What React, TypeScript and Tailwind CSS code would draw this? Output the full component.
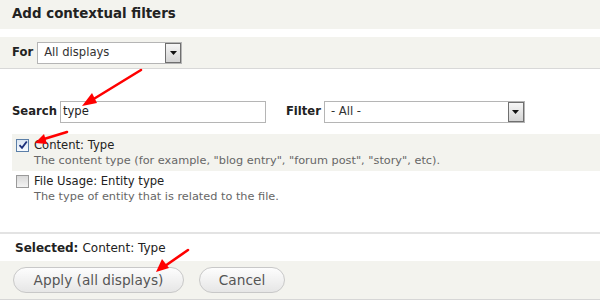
const font = { fontFamily: '"DejaVu Sans", Verdana, sans-serif' }

function SelectBox({ value, width }: { value: string; width: string }) {
  return (
    <div className={`flex h-[22px] items-center border border-[#b5b5b5] bg-white ${width}`}>
      <span className="flex-1 truncate pl-[6px] text-[11.6px] text-[#333]">{value}</span>
      <span className="flex h-[20px] w-[16px] items-center justify-center border border-[#6f6f6f] bg-gradient-to-b from-[#f6f6f6] to-[#d4d4d4]">
        <svg width="7" height="4" viewBox="0 0 7 4">
          <path d="M0 0h7L3.5 4z" fill="#111" />
        </svg>
      </span>
    </div>
  )
}

function Checkbox({ checked }: { checked?: boolean }) {
  return (
    <span
      className={`flex h-[13px] w-[13px] shrink-0 items-center justify-center border bg-gradient-to-b ${
        checked ? 'border-[#5b7fa8] from-[#dbe6f2] to-[#f7fbff]' : 'border-[#9a9a9a] from-[#d9d9d9] to-[#f4f4f4]'
      }`}
    >
      {checked && (
        <svg width="10" height="10" viewBox="0 0 10 10">
          <path d="M1.5 5.2 4 7.8 8.8 1.5" stroke="#1b2f7a" strokeWidth="1.8" fill="none" />
        </svg>
      )}
    </span>
  )
}

function Arrows() {
  return (
    <svg className="pointer-events-none absolute inset-0" width="600" height="300" viewBox="0 0 600 300">
      <g stroke="#f00" strokeWidth="2.6" strokeLinecap="round" fill="#f00">
        <line x1="141" y1="70" x2="92" y2="100" />
        <polygon points="82,106 92,93 97,103" stroke="none" />
        <line x1="67" y1="132" x2="44" y2="139" />
        <polygon points="35,143 44,134 47,144" stroke="none" />
        <line x1="188" y1="250" x2="165" y2="266" />
        <polygon points="156,272 162,259 169,268" stroke="none" />
      </g>
    </svg>
  )
}

export default function App() {
  return (
    <div className="relative h-[300px] w-[600px] overflow-hidden bg-white text-[#222]" style={font}>
      <div className="flex h-[29px] items-center bg-[#f3f3ee] px-[12px]">
        <h1 className="text-[13.4px] font-bold text-[#222]">Add contextual filters</h1>
      </div>

      <div className="mt-[8px] flex h-[32px] items-center gap-[4px] border-b border-[#d8d8d8] bg-[#f3f3ee] pl-[12px]">
        <span className="text-[11.6px] font-bold">For</span>
        <SelectBox value="All displays" width="w-[145px]" />
      </div>

      <div className="mt-[32px] flex items-center pl-[12px]">
        <span className="text-[11.6px] font-bold">Search</span>
        <div className="ml-[3px] flex h-[22px] w-[206px] items-center border border-[#b5b5b5] bg-white pl-[2px] text-[11.6px]">
          type
        </div>
        <span className="ml-[20px] text-[11.6px] font-bold">Filter</span>
        <div className="ml-[3px]">
          <SelectBox value="- All -" width="w-[201px]" />
        </div>
      </div>

      <div className="ml-[12px] mt-[11px] flex h-[37px] flex-col justify-center bg-[#f3f3ee] pl-[4px]">
        <div className="flex items-center gap-[5px]">
          <Checkbox checked />
          <span className="text-[11.6px] leading-[15px]">Content: Type</span>
        </div>
        <div className="pl-[18px] text-[11.3px] leading-[15px] text-[#666]">
          The content type (for example, "blog entry", "forum post", "story", etc).
        </div>
      </div>

      <div className="ml-[12px] flex h-[35px] flex-col justify-center pl-[4px]">
        <div className="flex items-center gap-[5px]">
          <Checkbox />
          <span className="text-[11.6px] leading-[15px]">File Usage: Entity type</span>
        </div>
        <div className="pl-[18px] text-[11.3px] leading-[15px] text-[#666]">
          The type of entity that is related to the file.
        </div>
      </div>

      <div className="mt-[26px] h-[2px] bg-[#e3e3e3]" />

      <div className="flex h-[27px] items-center pl-[15px] text-[12px]">
        <span className="font-bold">Selected:</span>
        <span className="ml-[4px]">Content: Type</span>
      </div>

      <div className="flex h-[40px] items-center gap-[15px] border-b-2 border-[#d6d6d6] bg-[#f3f3ee] pl-[13px]">
        <button className="h-[26px] w-[171px] rounded-full border border-[#c8c8c8] bg-gradient-to-b from-[#fdfdfd] to-[#e6e6e6] text-[13.7px] text-[#555]">
          Apply (all displays)
        </button>
        <button className="h-[26px] w-[86px] rounded-full border border-[#c8c8c8] bg-gradient-to-b from-[#fdfdfd] to-[#e6e6e6] text-[13.7px] text-[#555]">
          Cancel
        </button>
      </div>

      <Arrows />
    </div>
  )
}
